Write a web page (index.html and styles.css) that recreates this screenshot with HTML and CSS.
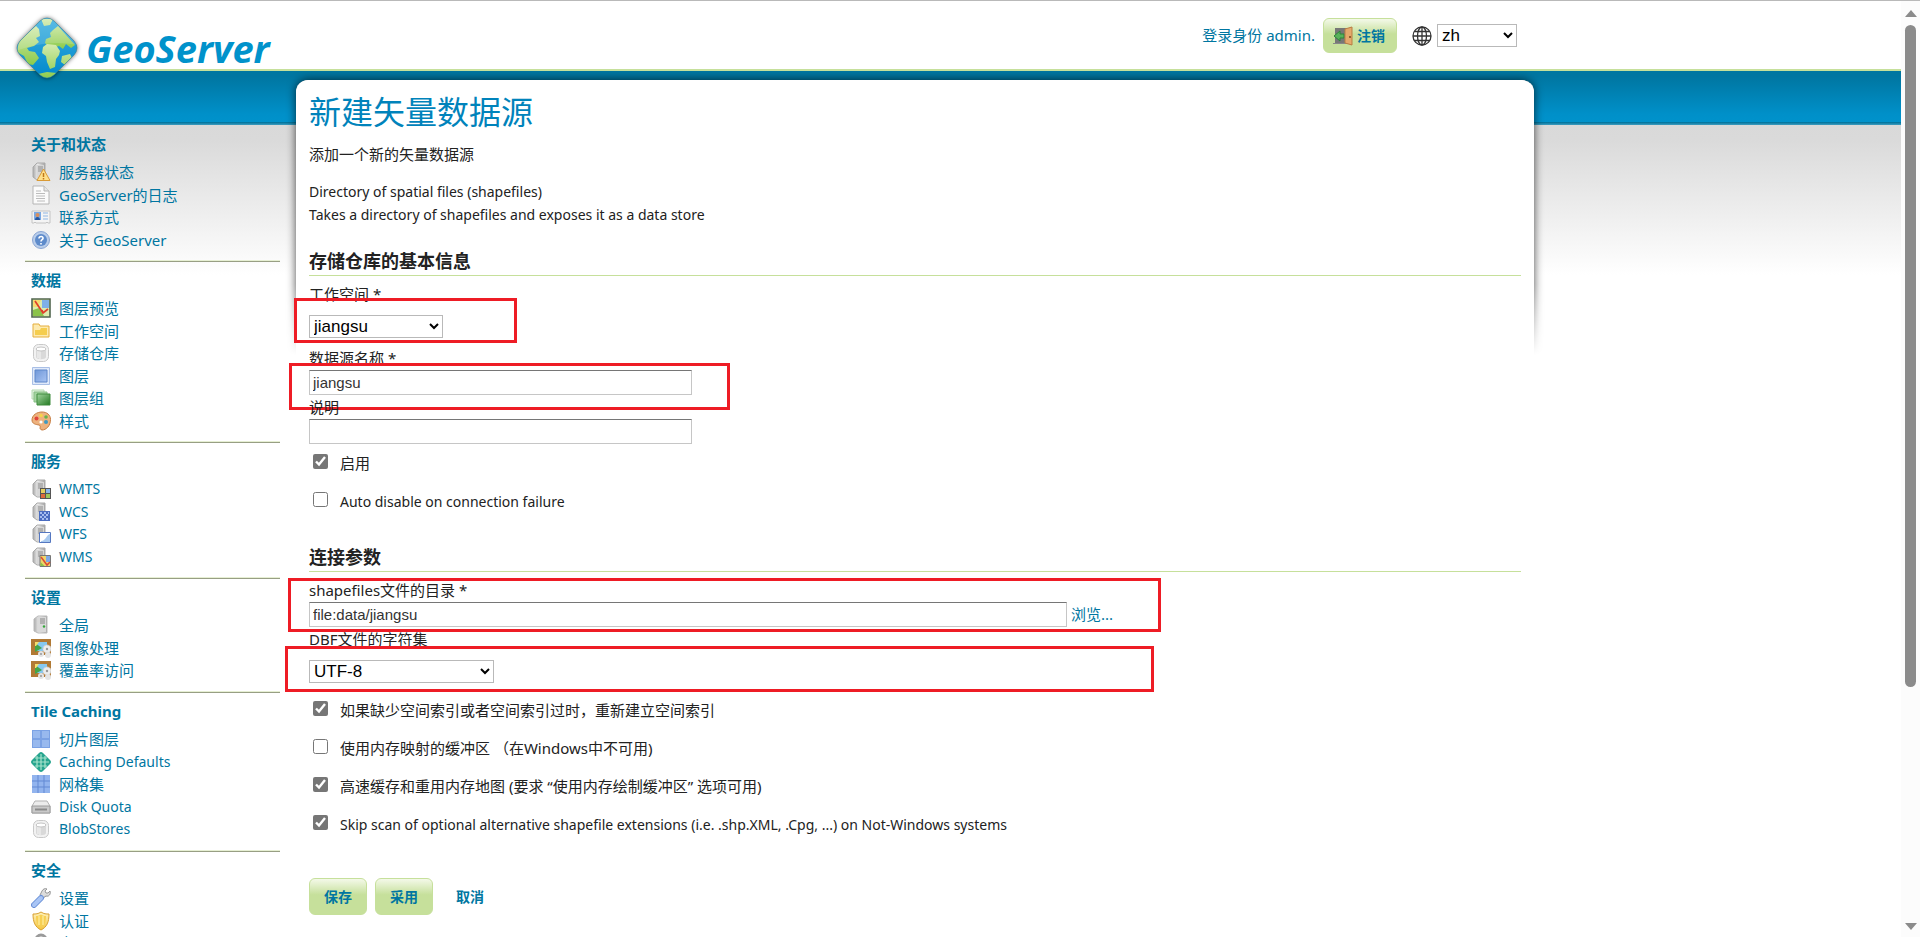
FILE: index.html
```html
<!DOCTYPE html>
<html lang="zh">
<head>
    <meta charset="UTF-8">
    <meta name="viewport" content="width=device-width, initial-scale=1.0">
    <title>GeoServer: 新建矢量数据源</title>
    <link rel="stylesheet" href="styles.css">
</head>
<body>
    <svg class="defs" aria-hidden="true">
        <defs>
            <linearGradient id="g-metal" x1="0" x2="1"><stop offset="0" stop-color="#a9a9a9"/><stop offset=".4" stop-color="#eee"/><stop offset="1" stop-color="#a2a2a2"/></linearGradient>
            <linearGradient id="g-blue" x1="0" y1="0" x2="1" y2="1"><stop offset="0" stop-color="#6f97d8"/><stop offset="1" stop-color="#a9c4f3"/></linearGradient>
            <linearGradient id="g-green" x1="0" y1="0" x2="1" y2="1"><stop offset="0" stop-color="#a3d6a0"/><stop offset="1" stop-color="#237a22"/></linearGradient>
            <linearGradient id="g-gold" x1="0" y1="0" x2="0" y2="1"><stop offset="0" stop-color="#fff3bf"/><stop offset="1" stop-color="#f3c33c"/></linearGradient>
            <linearGradient id="g-sea" x1="0" y1="0" x2="0" y2="1"><stop offset="0" stop-color="#3cb0e0"/><stop offset="1" stop-color="#0088cc"/></linearGradient>
            <linearGradient id="g-land" x1="0" y1="0" x2="0" y2="1"><stop offset="0" stop-color="#d3ebae"/><stop offset="1" stop-color="#8ccb4a"/></linearGradient>
            <symbol id="server" viewBox="0 0 20 20">
                <path d="M2 5 6 1h8v13l-3 4H6l-4-3z" fill="url(#g-metal)" stroke="#aaa"/>
                <path d="M6 3h7v12l-2 2H6z" fill="#d6d6d6"/><path d="M7 5h5M7 7h5M7 9h5" stroke="#8d8d8d"/>
            </symbol>
            <symbol id="i-status" viewBox="0 0 20 20"><use href="#server"/><path d="M12.500 7 19 18.500H6z" fill="#ffe08a" stroke="#d99a35" stroke-linejoin="round"/><path d="M12.500 11v4M12.500 16v1.500" stroke="#c07718" stroke-width="1.500"/></symbol>
            <symbol id="i-log" viewBox="0 0 20 20"><path d="M2 1h11l5 5v13H2z" fill="#fbfbfb" stroke="#b5b5b5"/><path d="M13 1v5h5" fill="#e6e6e6" stroke="#b5b5b5"/><path d="M5 6h5M5 8.500h9M5 11h9M5 13.500h9M6 16h8" stroke="#bcbcbc"/></symbol>
            <symbol id="i-card" viewBox="0 0 20 20"><path d="M1 4h18v12h-2l-1-1-1 1H5l-1-1-1 1H1z" fill="#f4f4f4" stroke="#c4c4c4"/><path d="M3 5h7v8H3z" fill="#7aa9e4"/><circle cx="6.500" cy="8" r="2" fill="#d98f5c"/><path d="M4 13c0-4 5-4 5 0z" fill="#28569c"/><path d="M12 6h5M12 9h5M12 12h5" stroke="#8fb6e3"/></symbol>
            <symbol id="i-help" viewBox="0 0 20 20"><circle cx="10" cy="10" r="8.500" fill="#b9cdea" stroke="#8ba6d3"/><circle cx="10" cy="10" r="6" fill="#5e8bcb"/><path d="M8 8.500c0-3 4.500-2.500 4 0-.2 1.200-2 1.300-2 3M10 13v1.500" fill="none" stroke="#fff" stroke-width="1.600"/></symbol>
            <symbol id="i-preview" viewBox="0 0 20 20"><path d="M1 1h18v18H1z" fill="#dcecae" stroke="#52664f" stroke-width="1.600"/><path d="M11 2h7v8h-7z" fill="#7fb0e8"/><path d="M2 12l6-2 5 8H2z" fill="#8bc34a"/><path d="M2 2h8l-3 7H2z" fill="#f5db70"/><path d="m4 3 8 12 5-4M12 15l-1-3" fill="none" stroke="#e0402a" stroke-width="1.700"/></symbol>
            <symbol id="i-folder" viewBox="0 0 20 20"><path d="M2 3h6l1 2h9v11H2z" fill="#fdeab0" stroke="#e5ae3e"/><path d="M4 14V9h5l1-2h6v7z" fill="#f5cd4e"/></symbol>
            <symbol id="i-store" viewBox="0 0 20 20"><rect x="2.500" y="1.500" width="15" height="17" rx="5" fill="#f2f2f2" stroke="#c9c9c9"/><path d="M5 6v8c0 3 10 3 10 0V6" fill="#d9d9d9"/><path d="M7 8v7M9 8v8" stroke="#f6f6f6"/><ellipse cx="10" cy="6" rx="5" ry="2" fill="#fff" stroke="#c4c4c4"/></symbol>
            <symbol id="i-layer" viewBox="0 0 20 20"><path d="M1.500 1.500h17v17h-17z" fill="#dfe9fa" stroke="#a9bfe6"/><path d="M4 4h12v12H4z" fill="url(#g-blue)" stroke="#5f87c9"/></symbol>
            <symbol id="i-group" viewBox="0 0 20 20"><path d="M1 2h12v9H1z" fill="#dff1dd" stroke="#b5dab2"/><path d="M3 4h13v10H3z" fill="#a4d3a1" stroke="#86bd83"/><path d="M6 6h13v11H6z" fill="url(#g-green)" stroke="#3f8b3c"/></symbol>
            <symbol id="i-style" viewBox="0 0 20 20"><path d="M1 9C1 4 6 1 11 1c5 0 8.500 3 8.500 7.500C19.500 15 15 19 11 19c-4-1 0-4-3-5-3-.5-7-1-7-5z" fill="#edb27e" stroke="#c67c40"/><circle cx="5.500" cy="7.500" r="2" fill="#e0443a"/><circle cx="10" cy="4.500" r="1.800" fill="#f6d34b"/><circle cx="15" cy="6" r="1.800" fill="#65b34d"/><circle cx="15" cy="11" r="2" fill="#3e9ac2"/><circle cx="10" cy="11" r="1.600" fill="#fff"/></symbol>
            <symbol id="i-wmts" viewBox="0 0 20 20"><use href="#server"/><path d="M9 9h11v11H9z" fill="#555"/><path d="M10 10h4v4h-4z" fill="#e5cf5f"/><path d="M15 10h4v4h-4z" fill="#8ab6ea"/><path d="M10 15h4v4h-4z" fill="#dd6b3c"/><path d="M15 15h4v4h-4z" fill="#9cc45a"/></symbol>
            <symbol id="i-wcs" viewBox="0 0 20 20"><use href="#server"/><path d="M8 9h11v10H8z" fill="#4a6cc0"/><path d="M9 10h2v2H9zM13 10h2v2h-2zM17 10h1v2h-1zM11 12h2v2h-2zM15 12h2v2h-2zM9 14h2v2H9zM13 14h2v2h-2zM11 16h2v2h-2zM15 16h2v2h-2z" fill="#a6bdf0"/></symbol>
            <symbol id="i-wfs" viewBox="0 0 20 20"><use href="#server"/><path d="M8.500 8.500h11v10h-11z" fill="#fff" stroke="#5577c0"/><path d="M10 17c5 0 5-6 9-7v8h-9z" fill="#a8c9ef"/></symbol>
            <symbol id="i-wms" viewBox="0 0 20 20"><use href="#server"/><path d="M9 8.500h10.500v11H9z" fill="#efd568" stroke="#777"/><path d="M15 9h4v6h-4z" fill="#7fa9e4"/><path d="M9.500 15l4 4h-4z" fill="#8bc34a"/><path d="m10 10 6 8 3-3" fill="none" stroke="#db4936" stroke-width="1.500"/></symbol>
            <symbol id="i-global" viewBox="0 0 20 20"><path d="M3 4 7 1h9v17H7l-4-2z" fill="url(#g-metal)" stroke="#bbb"/><path d="M7 2h8v15H7z" fill="#d9d9d9"/><path d="M9 4h5M9 6h5M9 8h5" stroke="#888"/><circle cx="13" cy="11.500" r="1.200" fill="#35a83a"/></symbol>
            <symbol id="i-image" viewBox="0 0 20 20"><path d="M0 1h20v16H0z" fill="#b17a35"/><path d="M4 4h12v9H4z" fill="#86c8f0"/><path d="M4 5l7 5-7 4z" fill="#44a648"/><path d="M4 4h4l-3 4H4z" fill="#f4df6c"/><circle cx="16" cy="11" r="4" fill="#ededed" stroke="#ccc" stroke-dasharray="2 1"/><circle cx="10" cy="16" r="3" fill="#e4e4e4"/><circle cx="17" cy="17" r="3" fill="#e4e4e4"/><circle cx="16" cy="11" r="1.200" fill="#999"/><circle cx="10" cy="16" r="1" fill="#999"/></symbol>
            <symbol id="i-tile" viewBox="0 0 20 20"><path d="M1 1h18v18H1z" fill="#7ba2e4"/><path d="M2 2h7v7H2zM11 2h7v7h-7zM2 11h7v7H2zM11 11h7v7h-7z" fill="#98b9ee"/></symbol>
            <symbol id="i-caching" viewBox="0 0 20 20"><path d="M8 1q2-2 4 0l7 7q2 2 0 4l-7 7q-2 2-4 0l-7-7q-2-2 0-4z" fill="#27a58f"/><path d="M6 4v12M10 2v16M14 4v12M4 6h12M2 10h16M4 14h12" stroke="#a8e3cc" stroke-width="1.200"/></symbol>
            <symbol id="i-grid" viewBox="0 0 20 20"><path d="M1 1h18v18H1z" fill="#92b4ee"/><path d="M7 1v18M13 1v18M1 7h18M1 13h18" stroke="#6389d3"/></symbol>
            <symbol id="i-disk" viewBox="0 0 20 20"><path d="M4 4h12l3 5v7H1V9z" fill="#ececec" stroke="#b3b3b3"/><path d="M1 9h18v7H1z" fill="#c9c9c9" stroke="#9c9c9c"/><path d="M4 12.500h12" stroke="#8a8a8a" stroke-width="2"/></symbol>
            <symbol id="i-wrench" viewBox="0 0 20 20"><path d="m12 8 3-3" stroke="#999" stroke-width="4"/><path d="M11 3c1-2 3-3 5-2l-2 2 1 2 2 0 2-2c1 3-1 6-4 5l-3 2-3-3z" fill="#dcdcdc" stroke="#989898"/><path d="m3 17 7-7" stroke="#6b90d6" stroke-width="6" stroke-linecap="round"/><path d="m3 17 7-7" stroke="#a9c5f5" stroke-width="4" stroke-linecap="round"/></symbol>
            <symbol id="i-shield" viewBox="0 0 20 20"><path d="M2 3c3 0 5 0 8-2 3 2 5 2 8 2 0 8-2 13-8 16C4 16 2 11 2 3z" fill="url(#g-gold)" stroke="#d9a02f"/><path d="M5 5c2 0 3 0 5-1.500C12 5 13 5 15 5c0 6-1 9-5 11.500C6 14 5 11 5 5z" fill="#f7cf52"/><path d="M8 5v9M12 5v9" stroke="#fff3b0"/></symbol>
            <symbol id="i-lock" viewBox="0 0 20 20"><path d="M5 10V7a5 5 0 0 1 10 0v3" fill="none" stroke="#9a9a9a" stroke-width="3"/><path d="M3 9h14v10H3z" fill="#efc652"/></symbol>
            <symbol id="i-logout" viewBox="0 0 20 20"><path d="M2 2h12v15H2z" fill="#777"/><path d="M0 17h19v1H0z" fill="#888"/><path d="m1 10 6-5v3h4v4H7v3z" fill="#59b25b" stroke="#2f8538"/><path d="m12 3 7-2v18l-7-2z" fill="#e5a96c" stroke="#b97c42"/><circle cx="17" cy="11" r="1" fill="#77491d"/></symbol>
            <symbol id="i-globe" viewBox="0 0 20 20"><g fill="none" stroke="#333" stroke-width="1.300"><circle cx="10" cy="10" r="9"/><ellipse cx="10" cy="10" rx="4.500" ry="9"/><path d="M10 1v18M1 10h18M2.500 5.500h15M2.500 14.500h15"/></g></symbol>
        </defs>
    </svg>

    <div class="page">
        <header class="header">
            <a class="logo" href="#">
                <svg viewBox="0 0 62 62" aria-hidden="true">
                    <clipPath id="diamond"><path d="M24 4q7-6 14 0l20 20q6 7 0 14L38 58q-7 6-14 0L4 38q-6-7 0-14z"/></clipPath>
                    <g clip-path="url(#diamond)">
                        <path d="M0 0h62v62H0z" fill="url(#g-sea)"/>
                        <g fill="url(#g-land)">
                            <path d="M3 24 20 9l3 3 1 7-4 2 3 4-5 4-7 2 2 3 6 1 4 6-6 7-5-1-4-8-7-4z"/>
                            <path d="M25 2h12l-3 6-6 1zM37 13l5-4 17 19-4 3-5-4-3 5-4-3-3 1-8-1-3-3 1-4 5-2-1-4z"/>
                            <path d="M27 30l4-3 9 1 4 6-1 4-3 4-1 8-5 2-3-7-1-6-4-3zM46 39l8-2 2 4-7 7-4-3zM22 57l9-2 10 1-8 6h-5z"/>
                        </g>
                        <path d="M0 0h62v28Q30 22 0 34z" fill="#fff" opacity=".15"/>
                    </g>
                    <path d="M24 4q7-6 14 0l20 20q6 7 0 14L38 58q-7 6-14 0L4 38q-6-7 0-14z" fill="none" stroke="#2e7f92" opacity=".5"/>
                </svg>
                <span>GeoServer</span>
            </a>
            <div class="account">
                <span class="user">登录身份 admin.</span>
                <button class="button logout" type="button"><svg class="icon"><use href="#i-logout"/></svg>注销</button>
                <svg class="icon globe"><use href="#i-globe"/></svg>
                <select class="lang" aria-label="Language"><option>zh</option></select>
            </div>
        </header>

        <div class="content">
            <nav class="sidebar">
                <section>
                    <h3>关于和状态</h3>
                    <ul>
                        <li><a href="#"><svg class="icon"><use href="#i-status"/></svg>服务器状态</a></li>
                        <li><a href="#"><svg class="icon"><use href="#i-log"/></svg>GeoServer的日志</a></li>
                        <li><a href="#"><svg class="icon"><use href="#i-card"/></svg>联系方式</a></li>
                        <li><a href="#"><svg class="icon"><use href="#i-help"/></svg>关于 GeoServer</a></li>
                    </ul>
                </section>
                <section>
                    <h3>数据</h3>
                    <ul>
                        <li><a href="#"><svg class="icon"><use href="#i-preview"/></svg>图层预览</a></li>
                        <li><a href="#"><svg class="icon"><use href="#i-folder"/></svg>工作空间</a></li>
                        <li><a href="#"><svg class="icon"><use href="#i-store"/></svg>存储仓库</a></li>
                        <li><a href="#"><svg class="icon"><use href="#i-layer"/></svg>图层</a></li>
                        <li><a href="#"><svg class="icon"><use href="#i-group"/></svg>图层组</a></li>
                        <li><a href="#"><svg class="icon"><use href="#i-style"/></svg>样式</a></li>
                    </ul>
                </section>
                <section>
                    <h3>服务</h3>
                    <ul class="en">
                        <li><a href="#"><svg class="icon"><use href="#i-wmts"/></svg>WMTS</a></li>
                        <li><a href="#"><svg class="icon"><use href="#i-wcs"/></svg>WCS</a></li>
                        <li><a href="#"><svg class="icon"><use href="#i-wfs"/></svg>WFS</a></li>
                        <li><a href="#"><svg class="icon"><use href="#i-wms"/></svg>WMS</a></li>
                    </ul>
                </section>
                <section>
                    <h3>设置</h3>
                    <ul>
                        <li><a href="#"><svg class="icon"><use href="#i-global"/></svg>全局</a></li>
                        <li><a href="#"><svg class="icon"><use href="#i-image"/></svg>图像处理</a></li>
                        <li><a href="#"><svg class="icon"><use href="#i-image"/></svg>覆盖率访问</a></li>
                    </ul>
                </section>
                <section>
                    <h3>Tile Caching</h3>
                    <ul>
                        <li><a href="#"><svg class="icon"><use href="#i-tile"/></svg>切片图层</a></li>
                        <li class="en"><a href="#"><svg class="icon"><use href="#i-caching"/></svg>Caching Defaults</a></li>
                        <li><a href="#"><svg class="icon"><use href="#i-grid"/></svg>网格集</a></li>
                        <li class="en"><a href="#"><svg class="icon"><use href="#i-disk"/></svg>Disk Quota</a></li>
                        <li class="en"><a href="#"><svg class="icon"><use href="#i-store"/></svg>BlobStores</a></li>
                    </ul>
                </section>
                <section>
                    <h3>安全</h3>
                    <ul>
                        <li><a href="#"><svg class="icon"><use href="#i-wrench"/></svg>设置</a></li>
                        <li><a href="#"><svg class="icon"><use href="#i-shield"/></svg>认证</a></li>
                        <li><a href="#"><svg class="icon"><use href="#i-lock"/></svg>密码</a></li>
                    </ul>
                </section>
            </nav>

            <main class="panel">
                <div class="panel-shadow"></div>
                <h1>新建矢量数据源</h1>
                <p class="lead">添加一个新的矢量数据源</p>
                <p class="about en">Directory of spatial files (shapefiles)<br>Takes a directory of shapefiles and exposes it as a data store</p>

                <form>
                    <h2>存储仓库的基本信息</h2>
                    <div class="field tall">
                        <label for="workspace">工作空间 *</label>
                        <select id="workspace" class="workspace"><option>jiangsu</option></select>
                        <div class="mark mark-workspace"></div>
                    </div>
                    <div class="field">
                        <label for="name">数据源名称 *</label>
                        <input type="text" id="name" value="jiangsu">
                        <div class="mark mark-name"></div>
                    </div>
                    <div class="field">
                        <label for="description">说明</label>
                        <input type="text" id="description">
                    </div>
                    <div class="check"><input type="checkbox" id="enabled" checked><label for="enabled">启用</label></div>
                    <div class="check en"><input type="checkbox" id="autodisable"><label for="autodisable">Auto disable on connection failure</label></div>

                    <h2 class="second">连接参数</h2>
                    <div class="field">
                        <label for="directory">shapefiles文件的目录 *</label>
                        <div class="file-row">
                            <input type="text" id="directory" class="wide" value="file:data/jiangsu">
                            <a href="#">浏览...</a>
                        </div>
                        <div class="mark mark-directory"></div>
                    </div>
                    <div class="field tall">
                        <label for="charset">DBF文件的字符集</label>
                        <select id="charset" class="charset"><option>UTF-8</option></select>
                        <div class="mark mark-charset"></div>
                    </div>
                    <div class="check"><input type="checkbox" id="index" checked><label for="index">如果缺少空间索引或者空间索引过时，重新建立空间索引</label></div>
                    <div class="check"><input type="checkbox" id="mmap"><label for="mmap">使用内存映射的缓冲区 （在Windows中不可用)</label></div>
                    <div class="check"><input type="checkbox" id="cache" checked><label for="cache">高速缓存和重用内存地图 (要求 “使用内存绘制缓冲区” 选项可用)</label></div>
                    <div class="check en"><input type="checkbox" id="skip" checked><label for="skip">Skip scan of optional alternative shapefile extensions (i.e. .shp.XML, .Cpg, ...) on Not-Windows systems</label></div>

                    <div class="actions">
                        <button class="button" type="button">保存</button>
                        <button class="button" type="button">采用</button>
                        <a href="#">取消</a>
                    </div>
                </form>
            </main>
        </div>
    </div>

    <div class="scrollbar" aria-hidden="true">
        <div class="arrow up"></div>
        <div class="thumb"></div>
        <div class="arrow down"></div>
    </div>
</body>
</html>
```
FILE: styles.css
```css
* {
    box-sizing: border-box;
}
body {
    margin: 0;
    height: 100vh;
    display: flex;
    overflow: hidden;
    background: #fff;
    color: #222;
    font-family: "Noto Sans", "Noto Sans CJK SC", sans-serif;
    font-size: 15px;
    line-height: 23px;
}
h1, h2, h3, p, ul {
    margin: 0;
    padding: 0;
}
ul {
    list-style: none;
}
a {
    color: #0076a1;
    text-decoration: none;
}
.defs {
    position: absolute;
    width: 0;
    height: 0;
}
.en {
    font-size: 14px;
}
.icon {
    width: 20px;
    height: 20px;
    flex: none;
}
.page {
    flex: 1;
    min-width: 0;
    overflow: hidden;
    border-top: 1px solid #b9b9b9;
}

/* header */
.header {
    position: relative;
    z-index: 2;
    height: 70px;
    padding-left: 16px;
    border-bottom: 2px solid #c6e09b;
    display: flex;
    justify-content: space-between;
    align-items: flex-start;
}
.logo {
    display: flex;
    align-items: center;
    gap: 8px;
    padding-top: 16px;
    color: #0092cb;
    font: italic bold 38px/48px "Open Sans", sans-serif;
}
.logo svg {
    width: 62px;
    height: 62px;
    filter: drop-shadow(0 0 2px rgba(0, 0, 0, 0.6));
}
.account {
    display: flex;
    align-items: center;
    padding-top: 17px;
    margin-right: 384px;
}
.user {
    color: #0076a1;
    margin-right: 8px;
}
.button {
    height: 37px;
    padding: 0 14px;
    border: 1px solid #c6e09b;
    border-radius: 6px;
    background: linear-gradient(#f4f9e9, #c6e09b 45%);
    color: #0076a1;
    font: bold 14px/20px "Noto Sans", "Noto Sans CJK SC", sans-serif;
    cursor: pointer;
}
.logout {
    height: 35px;
    padding: 0 11px 0 9px;
    display: flex;
    align-items: center;
    gap: 4px;
}
.globe {
    margin: 0 5px 0 15px;
}
select {
    height: 23px;
    padding: 0;
    border: 1px solid #b9b9b9;
    border-radius: 0;
    background-color: #fff;
    color: #000;
    font: 17px "Liberation Sans", Arial, sans-serif;
}
.lang {
    width: 80px;
}

/* blue band, then the grey fade under it */
.content {
    display: flex;
    align-items: flex-start;
    padding: 9px 0 40px 25px;
    background:
        linear-gradient(#0076a1, #0076a1 10%, #0090c9 80%, #0092cb 94%, #00739c 95%, #3c9dc0) 0 0 / 100% 54px no-repeat,
        linear-gradient(#d9d9d9, #dadada 10%, #fff) 0 54px / 100% 150px no-repeat;
}

/* sidebar */
.sidebar {
    width: 255px;
    flex: none;
    margin: 46px 16px 0 0;
}
.sidebar section {
    padding: 7px 0 10px 6px;
    border-bottom: 1px solid #989f84;
    box-shadow: inset 0 -1px #e6efd3;
}
.sidebar section:last-child {
    border-bottom: 0;
    box-shadow: none;
}
.sidebar h3 {
    color: #0076a1;
    font-size: 15px;
    line-height: 22px;
    margin-bottom: 6px;
}
.sidebar li {
    height: 22px;
}
.sidebar li:nth-child(odd) {
    height: 23px;
}
.sidebar li a {
    display: flex;
    align-items: center;
    gap: 8px;
    line-height: 22px;
}

/* main panel */
.panel {
    position: relative;
    isolation: isolate;
    flex: 1;
    max-width: 1238px;
    padding: 12px 13px;
    border-radius: 12px;
    background: #fff;
}
.panel-shadow {
    position: absolute;
    z-index: -1;
    top: -9px;
    left: -12px;
    right: -12px;
    height: 284px;
    overflow: hidden;
    -webkit-mask-image: linear-gradient(#000 75%, transparent);
    mask-image: linear-gradient(#000 75%, transparent);
}
.panel-shadow::before {
    content: "";
    position: absolute;
    inset: 9px 12px -20px;
    border-radius: 12px;
    background: #fff;
    box-shadow: 0 0 10px rgba(0, 0, 0, 0.7);
}
h1 {
    color: #0083bb;
    font-size: 32px;
    font-weight: normal;
    line-height: 40px;
}
.lead {
    margin: 11px 0 14px;
}
.about {
    margin-bottom: 22px;
}
h2 {
    font-size: 18px;
    line-height: 26px;
    padding-bottom: 1px;
    border-bottom: 1px solid #c6e09b;
    margin-bottom: 6px;
}
h2.second {
    margin-top: 24px;
}
.field {
    position: relative;
    display: flex;
    flex-direction: column;
    align-items: flex-start;
}
.field label {
    line-height: 24px;
}
.tall select {
    margin: 9px 0 8px;
}
.workspace {
    width: 134px;
}
.charset {
    width: 185px;
}
input[type="text"] {
    width: 383px;
    height: 25px;
    padding: 0 3px;
    border: 1px solid #c6c6c6;
    border-top-color: #767676;
    background: #fff;
    color: #333;
    font: 15px "Liberation Sans", Arial, sans-serif;
}
input.wide {
    width: 758px;
}
.file-row {
    display: flex;
    align-items: center;
    gap: 4px;
}
.check {
    display: flex;
    align-items: center;
    height: 38px;
    padding-left: 4px;
}
.check input {
    width: 15px;
    height: 15px;
    margin: 0 12px 4px 0;
    accent-color: #767676;
}
.actions {
    display: flex;
    align-items: center;
    gap: 8px;
    margin-top: 35px;
}
.actions a {
    margin-left: 15px;
    font-size: 14px;
    font-weight: bold;
}

/* red highlight frames over the fields */
.mark {
    position: absolute;
    border: 3px solid #ee1c25;
    pointer-events: none;
}
.mark-workspace {
    left: -15px;
    top: 16px;
    width: 223px;
    height: 45px;
}
.mark-name {
    left: -20px;
    top: 17px;
    width: 441px;
    height: 47px;
}
.mark-directory {
    left: -21px;
    top: 0;
    width: 873px;
    height: 54px;
}
.mark-charset {
    left: -24px;
    top: 19px;
    width: 869px;
    height: 46px;
}

/* scrollbar strip */
.scrollbar {
    width: 19px;
    flex: none;
    display: flex;
    flex-direction: column;
    align-items: center;
    padding: 9px 0 7px;
    border-top: 1px solid #b9b9b9;
    background: #fcfcfc;
}
.thumb {
    width: 11px;
    height: 72%;
    margin: 8px 0 auto;
    border-radius: 6px;
    background: #8b8b8b;
}
.arrow {
    border: 6px solid transparent;
}
.up {
    border-top: 0;
    border-bottom: 7px solid #8b8b8b;
}
.down {
    border-bottom: 0;
    border-top: 7px solid #8b8b8b;
}
```
